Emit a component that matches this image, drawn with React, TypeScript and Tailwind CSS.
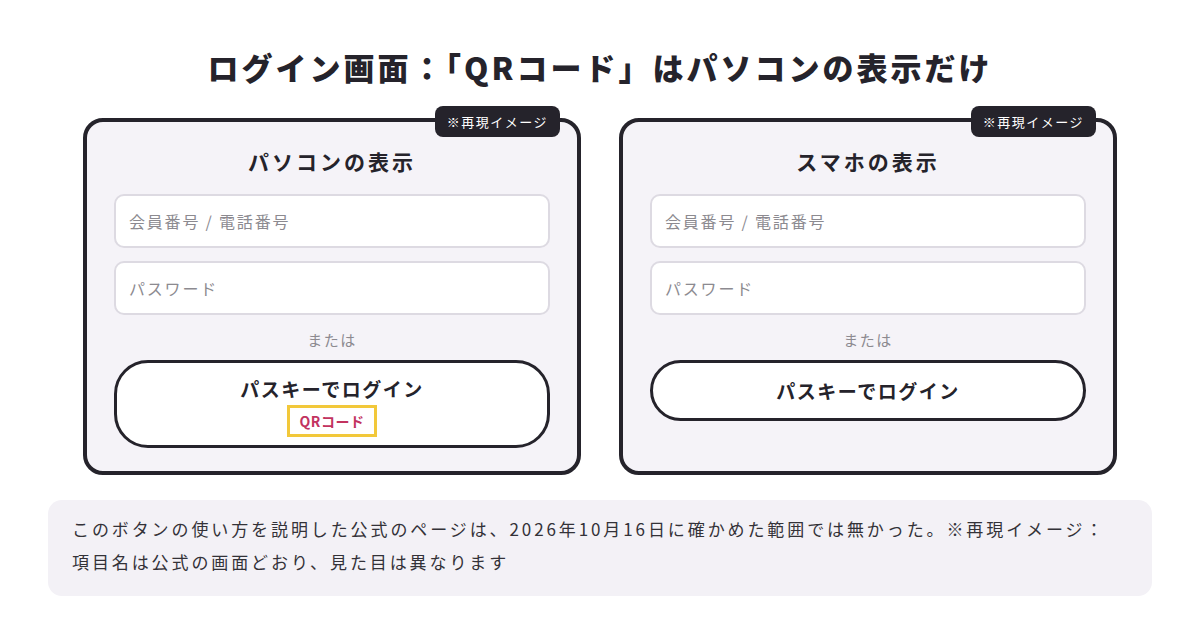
const font = { fontFamily: '"Noto Sans CJK JP", "Noto Sans", sans-serif' };

const Field = ({ label }: { label: string }) => (
    <div className="h-[54px] rounded-[10px] border-2 border-[#dddae2] bg-white flex items-center px-[13px] text-[16px] tracking-[1.8px] text-[#8c8a90]">
        {label}
    </div>
);

const Card = ({ title, showQr }: { title: string; showQr: boolean }) => (
    <div className="relative rounded-[20px] border-4 border-[#25232b] bg-[#f5f3f8] px-[27px] pt-[25px] pb-[23px]">
        <div className="absolute -top-[16px] right-[17px] h-[31px] px-[12px] rounded-[8px] bg-[#25232b] text-white text-[13px] tracking-[1.5px] flex items-center">
            ※再現イメージ
        </div>
        <h2 className="text-center text-[21px] leading-[28px] font-bold tracking-[3px] text-[#25232b]">{title}</h2>
        <div className="mt-[19px] flex flex-col gap-[13px]">
            <Field label="会員番号 / 電話番号" />
            <Field label="パスワード" />
        </div>
        <div className="mt-[14px] text-center text-[15px] leading-[22px] tracking-[1.5px] text-[#8c8a90]">または</div>
        <div
            className={
                showQr
                    ? 'mt-[9px] h-[88px] rounded-[34px] border-[3px] border-[#25232b] bg-white flex flex-col items-center pt-[13px]'
                    : 'mt-[9px] h-[61px] rounded-[34px] border-[3px] border-[#25232b] bg-white flex flex-col items-center justify-center'
            }
        >
            <span className="text-[19px] leading-[26px] font-bold tracking-[1.5px] text-[#25232b]">パスキーでログイン</span>
            {showQr && (
                <span className="mt-[3px] h-[32px] px-[10px] border-[3px] border-[#f2c83a] text-[#c2335f] text-[14px] tracking-[0.5px] font-bold flex items-center">
                    QRコード
                </span>
            )}
        </div>
    </div>
);

export default function App() {
    return (
        <div className="w-[1200px] h-[636px] bg-white pt-[46px]" style={font}>
            <h1 className="text-center text-[31px] leading-[42px] font-black text-[#25232b] tracking-[3px]">
                ログイン画面：「QRコード」はパソコンの表示だけ
            </h1>
            <div className="mt-[30px] mx-[83px] grid grid-cols-2 gap-[38px]">
                <Card title="パソコンの表示" showQr />
                <Card title="スマホの表示" showQr={false} />
            </div>
            <div className="mt-[25px] mx-[48px] rounded-[14px] bg-[#f3f1f6] px-[24px] pt-[12px] pb-[18px] text-[17px] tracking-[2.9px] leading-[33px] text-[#333238]">
                このボタンの使い方を説明した公式のページは、2026年10月16日に確かめた範囲では無かった。※再現イメージ：
                <br />
                項目名は公式の画面どおり、見た目は異なります
            </div>
        </div>
    );
}
